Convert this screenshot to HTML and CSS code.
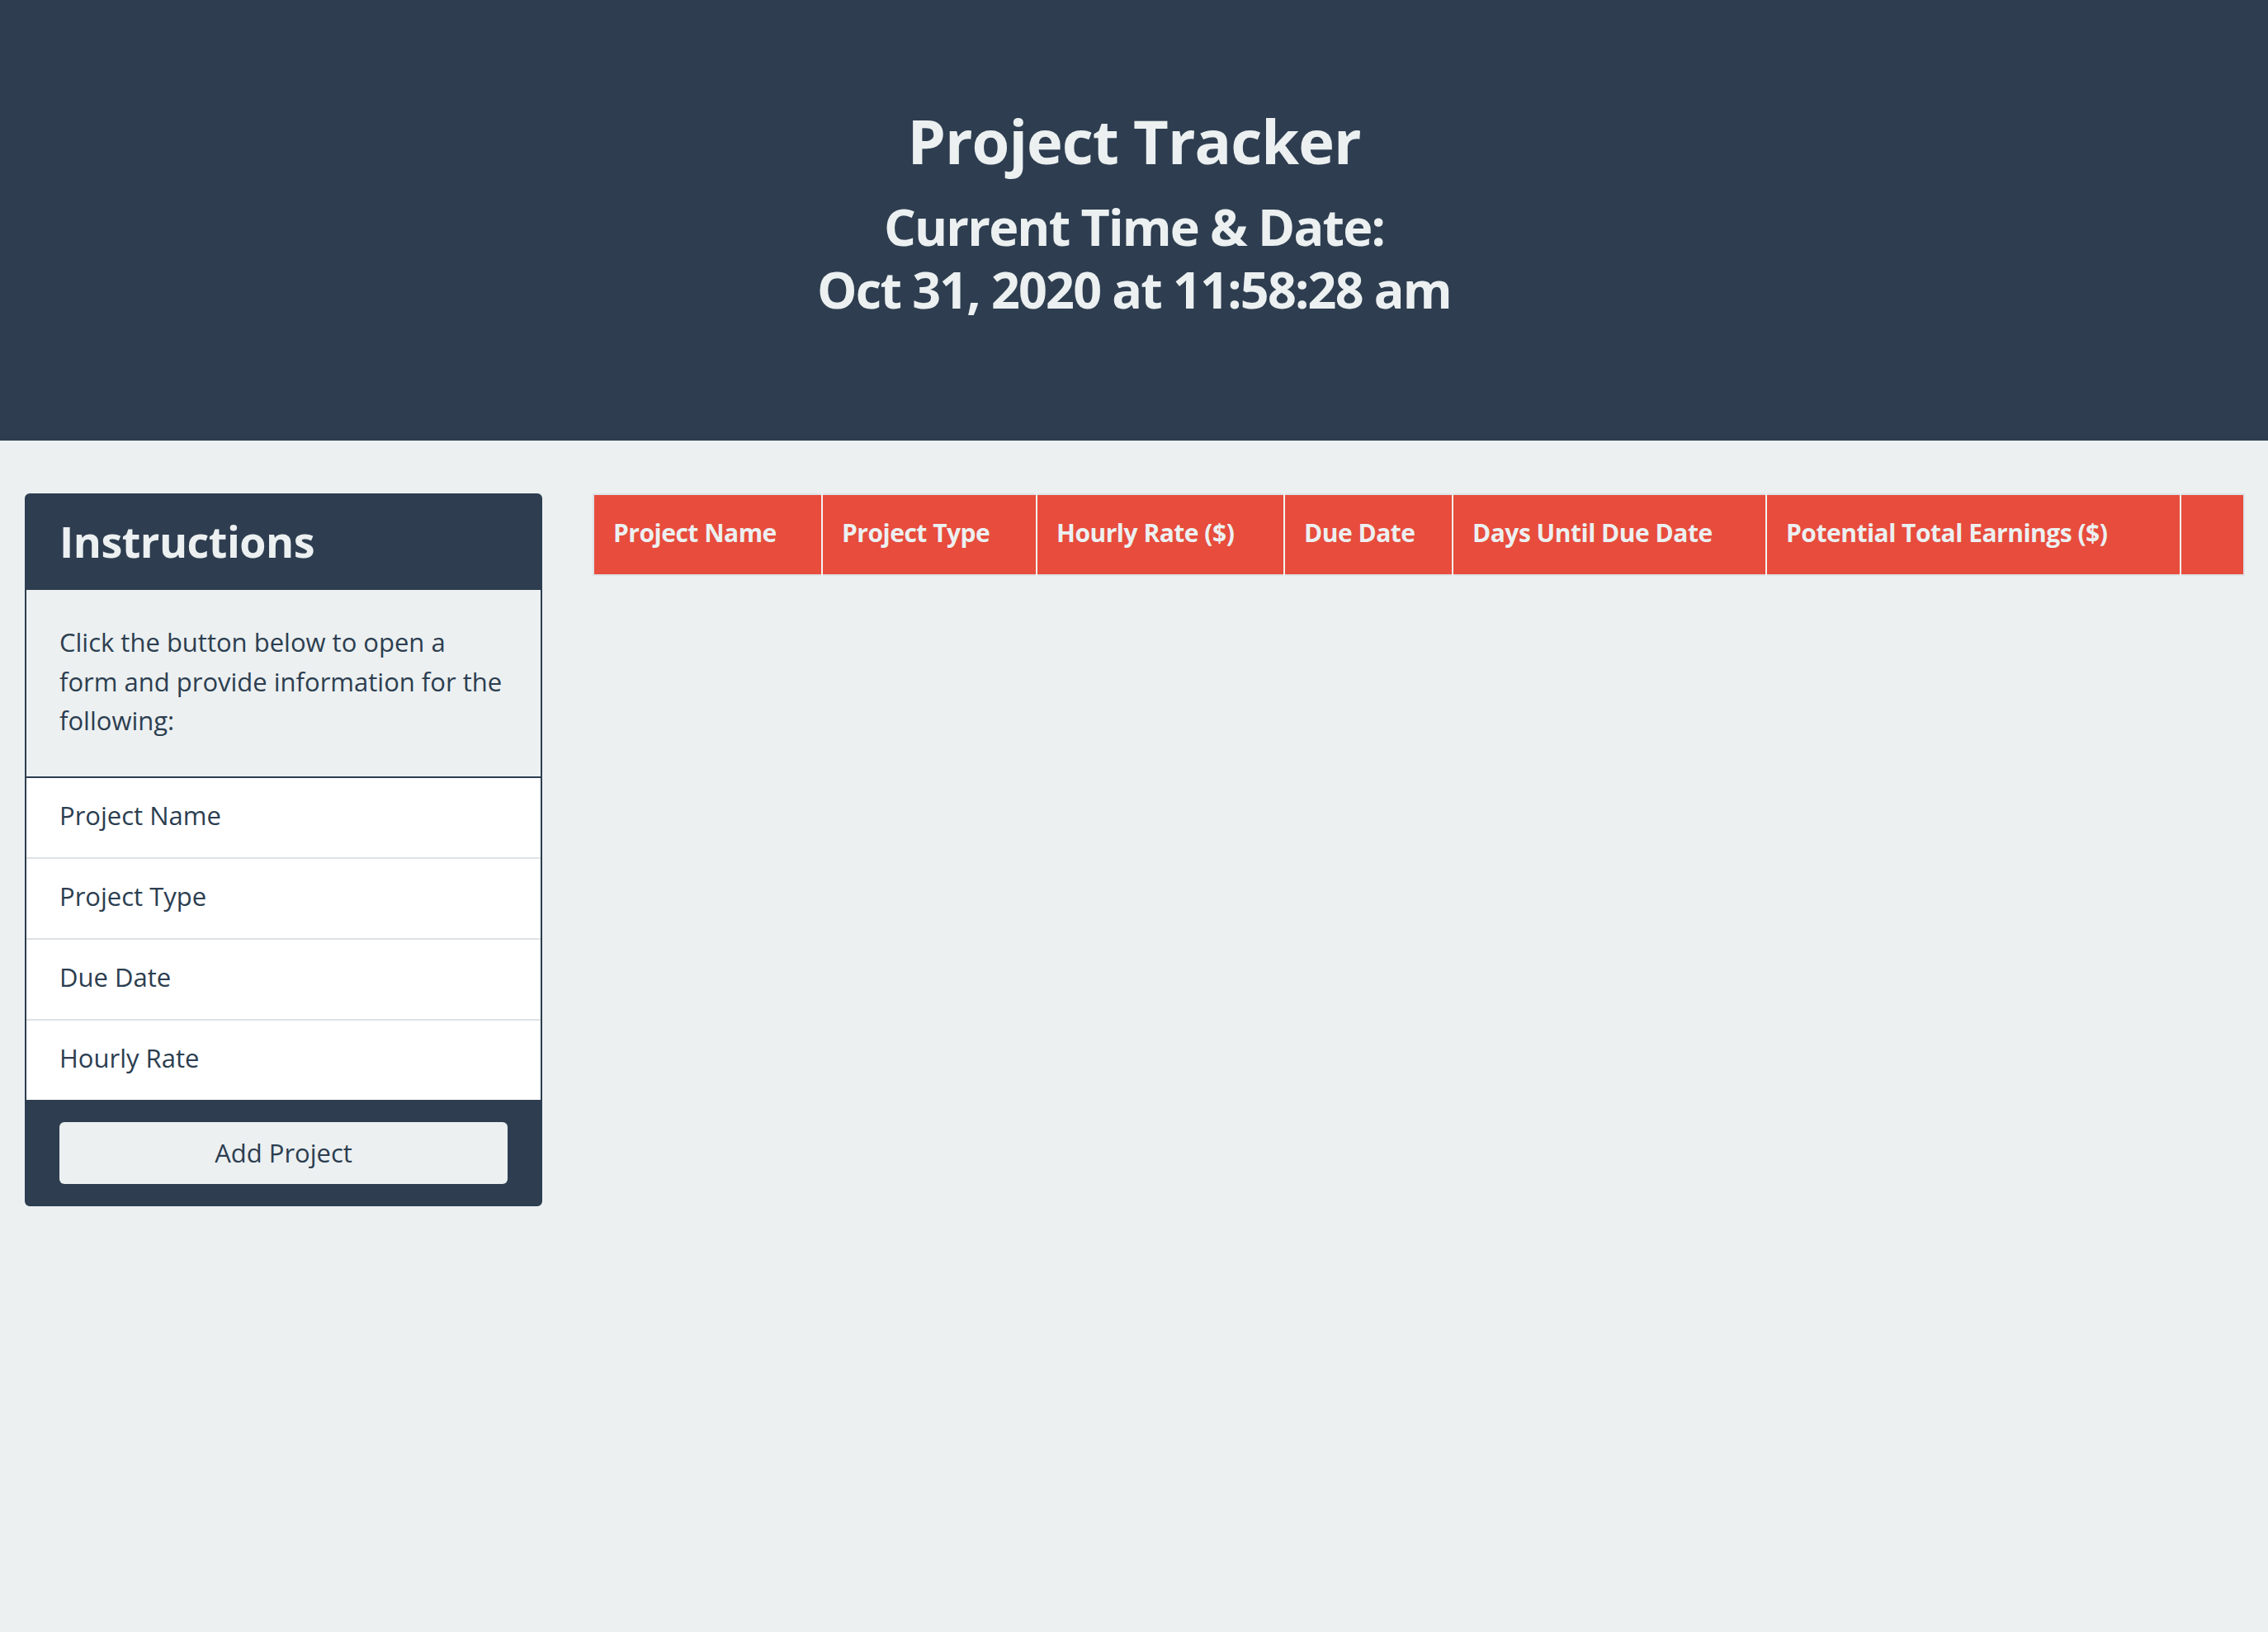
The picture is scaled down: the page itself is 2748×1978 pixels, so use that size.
FILE: index.html
```html
<!DOCTYPE html>
<html lang="en">
<head>
<meta charset="utf-8">
<title>Project Tracker</title>
<link rel="stylesheet" href="styles.css">
</head>
<body>
<header class="hero">
  <h1 class="hero-title">Project Tracker</h1>
  <h2 class="hero-time">
    <span class="hero-line">Current Time &amp; Date:</span>
    <span class="hero-line">Oct 31, 2020 at 11:58:28 am</span>
  </h2>
</header>
<main class="layout">
  <aside class="card">
    <div class="card-header">Instructions</div>
    <div class="card-body">
      <p class="card-text">Click the button below to open a form and provide information for the following:</p>
    </div>
    <ul class="list">
      <li class="list-item">Project Name</li>
      <li class="list-item">Project Type</li>
      <li class="list-item">Due Date</li>
      <li class="list-item">Hourly Rate</li>
    </ul>
    <div class="card-footer">
      <button class="btn" type="button">Add Project</button>
    </div>
  </aside>
  <section class="table-wrap">
    <table class="projects">
      <colgroup>
        <col class="c-name">
        <col class="c-type">
        <col class="c-rate">
        <col class="c-due">
        <col class="c-days">
        <col class="c-earn">
        <col class="c-act">
      </colgroup>
      <thead>
        <tr>
          <th>Project Name</th>
          <th>Project Type</th>
          <th>Hourly Rate ($)</th>
          <th>Due Date</th>
          <th>Days Until Due Date</th>
          <th>Potential Total Earnings ($)</th>
          <th></th>
        </tr>
      </thead>
      <tbody></tbody>
    </table>
  </section>
</main>
</body>
</html>
```

FILE: styles.css
```css
html {
  background: #ecf0f1;
}
body {
  margin: 0;
  font-family: "Open Sans", "Liberation Sans", sans-serif;
  color: #2c3e50;
  background: #ecf0f1;
}
.hero {
  background: #2e3e50;
  color: #ecf0f1;
  text-align: center;
  padding: 127px 0 145px;
  box-sizing: border-box;
  height: 534px;
}
.hero-title {
  margin: 0;
  font-size: 74px;
  line-height: 88px;
  font-weight: 700;
  letter-spacing: -1px;
}
.hero-time {
  margin: 22px 0 0;
  font-size: 61px;
  line-height: 76px;
  font-weight: 700;
  letter-spacing: -1.8px;
}
.hero-line {
  display: block;
}
.layout {
  display: flex;
  align-items: flex-start;
  gap: 61px;
  padding: 64px 30px;
}
.card {
  width: 627px;
  flex: none;
  box-sizing: border-box;
  border: 2px solid #2c3e50;
  border-radius: 6px;
  overflow: hidden;
  background: #2c3e50;
}
.card-header {
  background: #2e3e50;
  color: #ecf0f1;
  font-size: 52px;
  font-weight: 700;
  line-height: 112px;
  padding: 0 40px 3px;
  letter-spacing: -0.5px;
}
.card-body {
  background: #ecf0f1;
  padding: 40px 40px 43px;
  border-bottom: 2px solid #2c3e50;
}
.card-text {
  margin: 0;
  font-size: 31px;
  line-height: 47.5px;
}
.list {
  list-style: none;
  margin: 0;
  padding: 0;
  background: #fff;
}
.list-item {
  font-size: 31px;
  line-height: 48px;
  padding: 21px 40px 27px;
  background: #fff;
  border-bottom: 2px solid #dee2e6;
}
.list-item:last-child {
  border-bottom: 0;
}
.card-footer {
  padding: 27px 40px 25px;
  background: #2e3e50;
}
.btn {
  display: block;
  width: 100%;
  height: 75px;
  border: 0;
  border-radius: 6px;
  background: #ecf0f1;
  color: #2c3e50;
  font-family: "Open Sans", "Liberation Sans", sans-serif;
  font-size: 31px;
  padding: 0;
}
.table-wrap {
  flex: 1;
  min-width: 0;
}
.projects {
  width: 100%;
  table-layout: fixed;
  border-collapse: collapse;
  border: 2px solid #dee2e6;
}
.c-name { width: 277px; }
.c-type { width: 260px; }
.c-rate { width: 300px; }
.c-due { width: 204px; }
.c-days { width: 380px; }
.c-earn { width: 502px; }
.c-act { width: 77px; }
.projects th {
  background: #e74c3c;
  color: #ecf0f1;
  font-size: 30px;
  font-weight: 700;
  line-height: 48px;
  text-align: left;
  padding: 22px 23px 26px;
  border-left: 2px solid #f3f3f3;
  white-space: nowrap;
  letter-spacing: -0.5px;
}
.projects th:first-child {
  border-left: 0;
}
```
